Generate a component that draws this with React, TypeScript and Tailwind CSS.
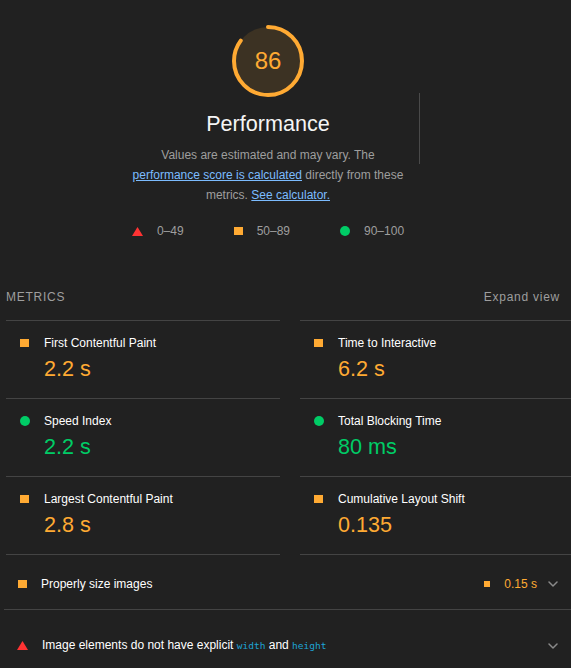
import React from "react";

type Rating = "pass" | "average" | "fail";

const Icon: React.FC<{ rating: Rating; size?: "sm" | "md" }> = ({ rating, size = "md" }) => {
  if (rating === "fail") {
    return (
      <svg className="w-[11px] h-[9px] flex-shrink-0" viewBox="0 0 11 9">
        <path d="M5.5 0L11 9H0z" fill="#ff3333" />
      </svg>
    );
  }
  if (rating === "pass") {
    return <div className="w-[10px] h-[10px] rounded-full bg-[#00cc66] flex-shrink-0" />;
  }
  return (
    <div
      className={`flex-shrink-0 bg-[#ffaa33] ${size === "sm" ? "w-[6px] h-[6px]" : "w-[9px] h-[8px]"}`}
    />
  );
};

const Chevron = () => (
  <svg className="w-[10px] h-[6px] flex-shrink-0" viewBox="0 0 10 6" fill="none">
    <path d="M1 1l4 4 4-4" stroke="#8a8a8a" strokeWidth={1.5} strokeLinecap="round" strokeLinejoin="round" />
  </svg>
);

const Gauge: React.FC<{ score: number }> = ({ score }) => {
  const r = 34;
  const c = 2 * Math.PI * r;
  return (
    <div className="relative w-[72px] h-[72px]">
      <svg className="w-[72px] h-[72px]" viewBox="0 0 72 72">
        <circle cx="36" cy="36" r={r} fill="rgba(255,170,51,0.12)" />
        <circle
          cx="36"
          cy="36"
          r={r}
          fill="none"
          stroke="#ffaa33"
          strokeWidth={4}
          strokeLinecap="round"
          strokeDasharray={`${(score / 100) * c - 2} ${c}`}
          transform="rotate(-90 36 36)"
        />
      </svg>
      <div className="absolute inset-0 flex items-center justify-center text-[24px] text-[#ffaa33]">
        {score}
      </div>
    </div>
  );
};

const metrics: { name: string; value: string; rating: Rating }[] = [
  { name: "First Contentful Paint", value: "2.2 s", rating: "average" },
  { name: "Time to Interactive", value: "6.2 s", rating: "average" },
  { name: "Speed Index", value: "2.2 s", rating: "pass" },
  { name: "Total Blocking Time", value: "80 ms", rating: "pass" },
  { name: "Largest Contentful Paint", value: "2.8 s", rating: "average" },
  { name: "Cumulative Layout Shift", value: "0.135", rating: "average" },
];

const legend: { rating: Rating; label: string }[] = [
  { rating: "fail", label: "0–49" },
  { rating: "average", label: "50–89" },
  { rating: "pass", label: "90–100" },
];

export default function App() {
  return (
    <div className="w-[571px] h-[668px] overflow-hidden bg-[#212121] text-[12px] text-[#f5f5f5] font-['Liberation_Sans',Arial,sans-serif]">
      {/* Score header */}
      <div className="flex">
        <div className="w-[419px] pl-[117px] pt-[25px] flex flex-col items-center">
          <Gauge score={86} />
          <div className="mt-[14px] text-[21.6px] leading-[26px] text-[#f5f5f5]">Performance</div>
          <p className="mt-[8px] text-center leading-[20px] text-[#9e9e9e] whitespace-nowrap">
            Values are estimated and may vary. The
            <br />
            <a className="text-[#7cbcff] underline">performance score is calculated</a> directly from these
            <br />
            metrics. <a className="text-[#7cbcff] underline">See calculator.</a>
          </p>
          <div className="mt-[16px] flex items-center gap-[50px] leading-[20px] text-[#9e9e9e]">
            {legend.map((l) => (
              <div key={l.label} className="flex items-center gap-[14px]">
                <Icon rating={l.rating} />
                <span>{l.label}</span>
              </div>
            ))}
          </div>
        </div>
        <div className="mt-[93px] h-[71px] w-px bg-[#4a4a4a]" />
      </div>

      {/* Metrics header */}
      <div className="mt-[46px] ml-[6px] mr-[11px] flex items-center justify-between leading-[20px] text-[#9e9e9e] tracking-[0.75px]">
        <span>METRICS</span>
        <span>Expand view</span>
      </div>

      {/* Metrics grid */}
      <div className="mt-[13px] ml-[6px] w-[568px] grid grid-cols-2 gap-x-[20px]">
        {metrics.map((m, i) => (
          <div
            key={m.name}
            className={`border-t border-[#444444] ${i >= 4 ? "border-b h-[79px]" : "h-[78px]"}`}
          >
            <div className="mt-[14px] pl-[14px] flex items-center leading-[16px]">
              <div className="w-[24px] flex items-center">
                <Icon rating={m.rating} />
              </div>
              <span className="text-white">{m.name}</span>
            </div>
            <div
              className={`mt-[5px] pl-[38px] text-[21.6px] leading-[26px] ${
                m.rating === "pass" ? "text-[#00cc66]" : "text-[#ffaa33]"
              }`}
            >
              {m.value}
            </div>
          </div>
        ))}
      </div>

      {/* Audits */}
      <div className="ml-[4px]">
        <div className="pt-[21px] pb-[17px] pl-[14px] pr-[13px] flex items-center border-b border-[#444444] leading-[16px]">
          <Icon rating="average" />
          <span className="ml-[14px] flex-1 text-white">Properly size images</span>
          <Icon rating="average" size="sm" />
          <span className="ml-[14px] text-[#ffaa33]">0.15 s</span>
          <span className="ml-[11px]">
            <Chevron />
          </span>
        </div>
        <div className="pt-[27px] pb-[17px] pl-[13px] pr-[13px] flex items-center border-b border-[#444444] leading-[16px]">
          <Icon rating="fail" />
          <span className="ml-[14px] flex-1 text-white">
            Image elements do not have explicit{" "}
            <code className="font-['DejaVu_Sans_Mono',monospace] text-[9.5px] text-[#1ea4d6]">width</code> and{" "}
            <code className="font-['DejaVu_Sans_Mono',monospace] text-[9.5px] text-[#1ea4d6]">height</code>
          </span>
          <Chevron />
        </div>
      </div>
    </div>
  );
}
